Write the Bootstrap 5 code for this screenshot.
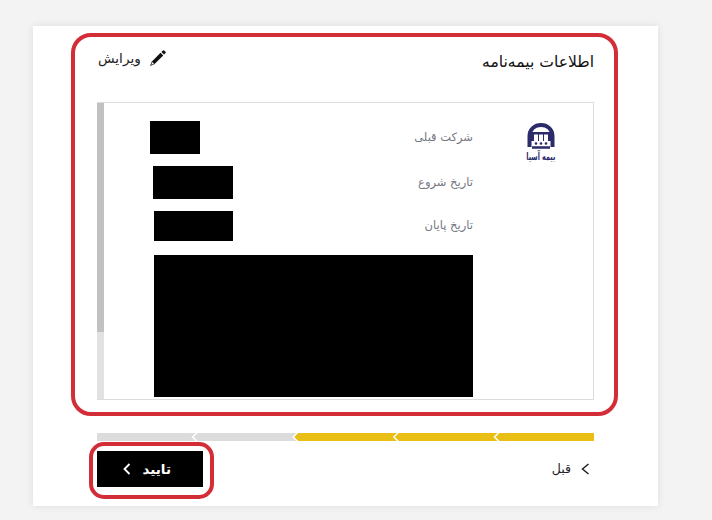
<!DOCTYPE html>
<html lang="fa" dir="rtl">
<head>
<meta charset="utf-8">
<title>اطلاعات بیمه‌نامه</title>
<link href="https://cdn.jsdelivr.net/npm/bootstrap@5.3.0/dist/css/bootstrap.min.css" rel="stylesheet">
<style>
html,body{height:100%;overflow:hidden}
body{background:#f3f3f3;font-family:"DejaVu Sans","Noto Sans",sans-serif;color:#111}
.sheet{position:relative;width:625px;height:480px;margin:26px 54px 0 33px;padding:0 64px;background:#fff;box-shadow:0 0 8px rgba(0,0,0,.09)}
.head-row{height:76px;padding-bottom:2px}
.head-title{font-size:15.6px;font-weight:500;color:#111}
.edit-link{font-size:13.6px;color:#222;gap:8px;margin-bottom:9px;padding-left:1px}
.panel-box{height:298px;border:1px solid #dcdcdc;border-left:0}
.logo-col{width:120px;padding:20px 0 0 16px}
.logo-name{font-size:7px;line-height:11px;font-weight:700;color:#2b2a6b;white-space:nowrap;margin-top:2px;transform:scale(.92,1.5)}
.rows-col{padding:18px 0 0 46px;gap:12px}
.info-label{font-size:11.500px;color:#77777f}
.mask{background:#000}
.mask-a{width:50px;height:33px}
.mask-b{width:80px;height:33px;margin-left:3px}
.mask-c{width:79px;height:30px;margin-left:4px}
.mask-d{height:142px;margin:2px 0 0 4px}
.scroll-track{width:7px;background:#e2e2e2}
.scroll-thumb{height:229px;background:#c1c1c1}
.steps-bar{margin-top:33px;height:8px}
.step-item{height:8px;flex:1 1 0;margin-right:-2px;clip-path:polygon(4px 0,100% 0,calc(100% - 4px) 50%,100% 100%,4px 100%,0 50%)}
.step-item:first-child{flex:.96 1 0;margin-right:0;clip-path:polygon(4px 0,100% 0,100% 100%,4px 100%,0 50%)}
.step-item:last-child{flex:.96 1 0;clip-path:polygon(0 0,100% 0,calc(100% - 4px) 50%,100% 100%,0 100%)}
.step-on{background:#e9bf16}
.step-off{background:#dcdcdc}
.foot-row{margin-top:10px}
.prev-link{font-size:12.5px;color:#222;gap:10px;padding-right:4px}
.ok-btn{width:106px;height:36px;padding:0 32px 0 0;border:0;border-radius:0;background:#000;color:#fff;font-size:13.5px;font-weight:700;gap:11px}
.ok-btn:hover{background:#000;color:#fff}
.mark-frame{position:absolute;border:4px solid #d32d38;pointer-events:none}
.mark-main{left:38px;top:7px;width:547px;height:383px;border-radius:20px}
.mark-btn{left:56px;top:416px;width:125px;height:57px;border-radius:15px}
</style>
</head>
<body>
<main class="sheet">
  <div class="head-row d-flex justify-content-between align-items-center">
    <div class="head-title">اطلاعات بیمه‌نامه</div>
    <a class="edit-link d-flex align-items-center text-decoration-none" href="#">
      <svg width="17" height="17" viewBox="0 0 16 16" fill="#111" aria-hidden="true"><path d="M12.85.65a1.2 1.2 0 0 1 1.7 0l.8.8a1.2 1.2 0 0 1 0 1.7l-1.2 1.2-2.5-2.5zM10.9 2.6l2.5 2.5L5 13.5 1 15l1.5-4zM3 11.3l-.8 2.5 2.5-.8z"/></svg>
      <span>ویرایش</span>
    </a>
  </div>

  <section class="panel-box d-flex">
    <div class="logo-col d-flex flex-column align-items-center flex-shrink-0">
      <svg width="28" height="27" viewBox="0 0 28 27" aria-hidden="true">
        <path d="M2.500 24V13C2.500 6 8 2 14 2s11.500 4 11.500 11v11" fill="none" stroke="#2b2a6b" stroke-width="4"/>
        <path d="M5 24.500h18" stroke="#2b2a6b" stroke-width="2.500"/>
        <path d="M4 9h20v9H4z" fill="#2b2a6b"/>
        <path d="M7 11.500h4V18H7zM12 11.500h4V18h-4zM17 11.500h4V18h-4z" fill="#fff"/>
        <circle cx="9" cy="20.500" r="1.300" fill="#2b2a6b"/><circle cx="14" cy="20.500" r="1.300" fill="#2b2a6b"/><circle cx="19" cy="20.500" r="1.300" fill="#2b2a6b"/>
      </svg>
      <div class="logo-name">بیمه آسیا</div>
    </div>
    <div class="rows-col d-flex flex-column flex-grow-1">
      <div class="d-flex justify-content-between align-items-center"><span class="info-label">شرکت قبلی</span><span class="mask mask-a"></span></div>
      <div class="d-flex justify-content-between align-items-center"><span class="info-label">تاریخ شروع</span><span class="mask mask-b"></span></div>
      <div class="d-flex justify-content-between align-items-center"><span class="info-label">تاریخ پایان</span><span class="mask mask-c"></span></div>
      <div class="mask mask-d"></div>
    </div>
    <div class="scroll-track flex-shrink-0"><div class="scroll-thumb"></div></div>
  </section>

  <div class="steps-bar d-flex">
    <span class="step-item step-on"></span>
    <span class="step-item step-on"></span>
    <span class="step-item step-on"></span>
    <span class="step-item step-off"></span>
    <span class="step-item step-off"></span>
  </div>

  <div class="foot-row d-flex justify-content-between align-items-center">
    <a class="prev-link d-flex align-items-center text-decoration-none" href="#">
      <svg width="9" height="12" viewBox="0 0 9 12" fill="none" stroke="#222" stroke-width="1.500" aria-hidden="true"><path d="M7.500 1 1.500 6l6 5"/></svg>
      <span>قبل</span>
    </a>
    <button type="button" class="btn ok-btn d-flex align-items-center">
      <span>تایید</span>
      <svg width="8" height="12" viewBox="0 0 8 12" fill="none" stroke="#fff" stroke-width="1.800" aria-hidden="true"><path d="M6.500 1 1.500 6l5 5"/></svg>
    </button>
  </div>

  <div class="mark-frame mark-main"></div>
  <div class="mark-frame mark-btn"></div>
</main>
</body>
</html>
